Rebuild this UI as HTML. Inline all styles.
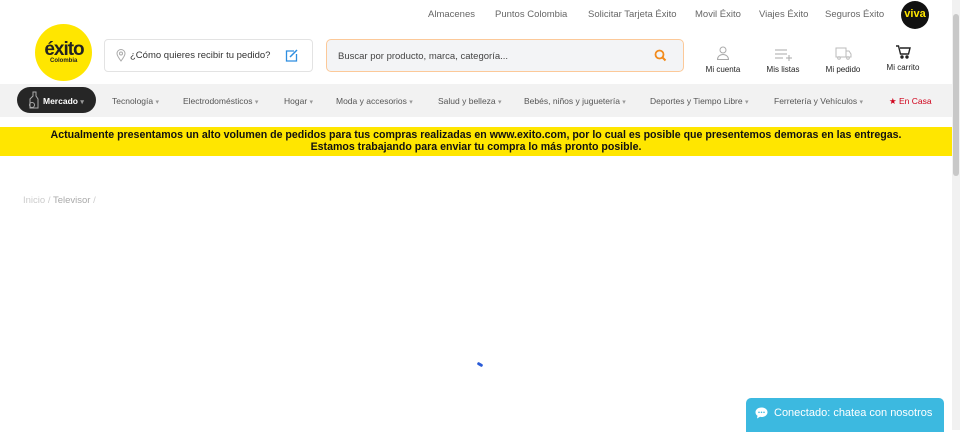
<!DOCTYPE html><html><head><meta charset="utf-8"><style>
*{margin:0;padding:0;box-sizing:border-box}
body{width:960px;height:430px;overflow:hidden;background:#fff;font-family:"Liberation Sans",sans-serif;position:relative;color:#333}
.a{position:absolute}
.top a{position:absolute;top:9px;font-size:9.5px;color:#666;text-decoration:none;white-space:nowrap}
.nav{position:absolute;left:0;top:84px;width:952px;height:33px;background:#f2f2f2}
.nav span{position:absolute;top:12px;font-size:8.5px;color:#555;white-space:nowrap}
.nav span i{font-style:normal;color:#999;font-size:7px}
.ic{position:absolute;top:64px;font-size:8px;color:#222;text-align:center;width:60px}
</style></head><body>
<div class="top">
<a style="left:428px">Almacenes</a><a style="left:495px">Puntos Colombia</a><a style="left:588px">Solicitar Tarjeta Éxito</a><a style="left:695px">Movil Éxito</a><a style="left:759px">Viajes Éxito</a><a style="left:825px">Seguros Éxito</a>
</div>
<div class="a" style="left:901px;top:1px;width:28px;height:28px;border-radius:50%;background:#111;color:#ffe600;font-weight:bold;font-size:11px;text-align:center;line-height:26px">viva</div>
<div class="a" style="left:35px;top:24px;width:57px;height:57px;border-radius:50%;background:#ffe600"></div>
<div class="a" style="left:38px;top:39px;width:52px;text-align:center;font-weight:bold;font-size:19px;color:#222;letter-spacing:-1px">éxito</div>
<div class="a" style="left:50px;top:58px;font-size:6px;color:#222;font-weight:bold">Colombia</div>
<div class="a" style="left:104px;top:39px;width:209px;height:33px;border:1px solid #e3e3e3;border-radius:4px"></div>
<svg class="a" style="left:116px;top:49px" width="10" height="13" viewBox="0 0 10 13"><path d="M5 12C2 8 1 6 1 4.5a4 4 0 0 1 8 0C9 6 8 8 5 12z" fill="none" stroke="#aaa"/><circle cx="5" cy="4.5" r="1.5" fill="none" stroke="#aaa"/></svg>
<div class="a" style="left:130px;top:50px;font-size:9.5px;color:#333">¿Cómo quieres recibir tu pedido?</div>
<svg class="a" style="left:285px;top:49px" width="13" height="13" viewBox="0 0 13 13"><path d="M9 2H1.5v10h10V5" fill="none" stroke="#2e8ee0" stroke-width="1.3"/><path d="M5 8l7-7" stroke="#2e8ee0" stroke-width="1.5"/></svg>
<div class="a" style="left:326px;top:39px;width:358px;height:33px;background:#f3f4f6;border:1px solid #fcc999;border-radius:5px"></div>
<div class="a" style="left:338px;top:51px;font-size:9.5px;color:#444">Buscar por producto, marca, categoría...</div>
<svg class="a" style="left:654px;top:49px" width="13" height="13" viewBox="0 0 13 13"><circle cx="5.5" cy="5.5" r="4" fill="none" stroke="#f28b1c" stroke-width="1.8"/><path d="M8.5 8.5l3 3" stroke="#f28b1c" stroke-width="2"/></svg>
<svg class="a" style="left:716px;top:46px" width="14" height="14" viewBox="0 0 14 14" fill="none" stroke="#aaa"><circle cx="7" cy="4" r="3"/><path d="M1.5 13.5c0-3 2.5-5 5.5-5s5.5 2 5.5 5z"/></svg>
<svg class="a" style="left:775px;top:49px" width="18" height="12" viewBox="0 0 18 12" stroke="#aaa"><path d="M0 1h12M0 5h12M0 9h8M11 9h6M14 6v6"/></svg>
<svg class="a" style="left:835px;top:47px" width="17" height="13" viewBox="0 0 17 13" fill="none" stroke="#bbb"><rect x="1" y="1" width="10" height="9"/><path d="M11 4h3l2 3v3h-5"/><circle cx="4" cy="11" r="1.3"/><circle cx="13" cy="11" r="1.3"/></svg>
<svg class="a" style="left:896px;top:45px" width="15" height="14" viewBox="0 0 15 14" fill="none" stroke="#222" stroke-width="1.4"><path d="M0 1h2.5l2 8h8l1.5-6H4"/><circle cx="6" cy="12" r="1" fill="#222"/><circle cx="11" cy="12" r="1" fill="#222"/></svg>
<div class="ic" style="left:693px;top:65px">Mi cuenta</div><div class="ic" style="left:753px;top:65px">Mis listas</div><div class="ic" style="left:813px;top:65px">Mi pedido</div><div class="ic" style="left:873px;top:63px">Mi carrito</div>
<div class="nav">
<div class="a" style="left:17px;top:3px;width:79px;height:26px;border-radius:13px;background:#262626"></div>
<svg class="a" style="left:28px;top:7px" width="12" height="18" viewBox="0 0 12 18" fill="none" stroke="#aaa"><path d="M5 1h3v4l2 3v9H2V8l3-3z"/><circle cx="4" cy="14" r="2.5"/></svg>
<span style="left:43px;color:#fff;font-weight:bold">Mercado <i>▾</i></span>
<span style="left:112px">Tecnología <i>▾</i></span><span style="left:183px">Electrodomésticos <i>▾</i></span><span style="left:284px">Hogar <i>▾</i></span><span style="left:336px">Moda y accesorios <i>▾</i></span><span style="left:438px">Salud y belleza <i>▾</i></span><span style="left:524px">Bebés, niños y juguetería <i>▾</i></span><span style="left:650px">Deportes y Tiempo Libre <i>▾</i></span><span style="left:774px">Ferretería y Vehículos <i>▾</i></span><span style="left:889px;color:#d0021b">★ En Casa</span>
</div>
<div class="a" style="left:0;top:127px;width:952px;height:29px;background:#ffe600;text-align:center;font-size:10.6px;font-weight:bold;color:#111;line-height:12px;padding-top:2px;white-space:nowrap">Actualmente presentamos un alto volumen de pedidos para tus compras realizadas en www.exito.com, por lo cual es posible que presentemos demoras en las entregas.<br>Estamos trabajando para enviar tu compra lo más pronto posible.</div>
<div class="a" style="left:23px;top:195px;font-size:9.5px;color:#ccc">Inicio / <span style="color:#aaa">Televisor</span> /</div>
<div class="a" style="left:477px;top:363px;width:6px;height:3px;background:#2a5bd7;border-radius:2px;transform:rotate(30deg)"></div>
<div class="a" style="left:952px;top:0;width:8px;height:430px;background:#f1f1f1"></div>
<div class="a" style="left:953px;top:14px;width:6px;height:162px;background:#c8c8c8;border-radius:3px"></div>
<div class="a" style="left:746px;top:398px;width:198px;height:34px;background:#3cb9e0;border-radius:5px 5px 0 0"></div>
<svg class="a" style="left:755px;top:407px" width="13" height="12" viewBox="0 0 13 12"><path d="M6.5 0.5C3 .5.5 2.6.5 5.2c0 1.5.8 2.8 2 3.6L2 11.5l3-1.7c.5.1 1 .2 1.5.2 3.5 0 6-2.2 6-4.8S10 .5 6.5.5z" fill="#fff"/><circle cx="4" cy="5.3" r=".8" fill="#3cb9e0"/><circle cx="6.5" cy="5.3" r=".8" fill="#3cb9e0"/><circle cx="9" cy="5.3" r=".8" fill="#3cb9e0"/></svg>
<div class="a" style="left:774px;top:407px;font-size:11px;color:#fff">Conectado: chatea con nosotros</div>
</body></html>
